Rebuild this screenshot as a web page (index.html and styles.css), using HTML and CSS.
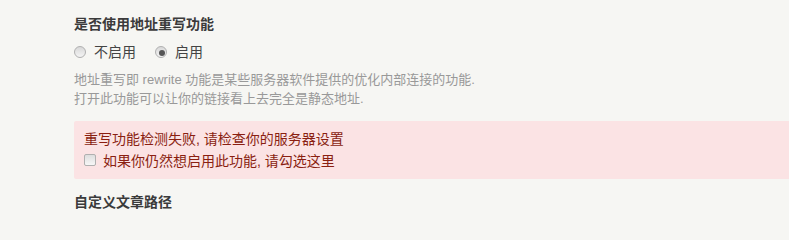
FILE: index.html
```html
<!DOCTYPE html>
<html lang="zh-CN">
<head>
<meta charset="utf-8">
<title>永久链接设置</title>
<link rel="stylesheet" href="styles.css">
</head>
<body>
<div class="page">
  <section class="option">
    <div class="option-label">是否使用地址重写功能</div>
    <div class="radios">
      <label class="radio"><input type="radio" name="rewrite" value="0"><span>不启用</span></label>
      <label class="radio"><input type="radio" name="rewrite" value="1" checked><span>启用</span></label>
    </div>
    <p class="description">地址重写即 rewrite 功能是某些服务器软件提供的优化内部连接的功能.<br>打开此功能可以让你的链接看上去完全是静态地址.</p>
  </section>
  <div class="message error">
    <p class="message-text">重写功能检测失败, 请检查你的服务器设置</p>
    <label class="check"><input type="checkbox" name="anyway"><span>如果你仍然想启用此功能, 请勾选这里</span></label>
  </div>
  <section class="option option-next">
    <div class="option-label">自定义文章路径</div>
  </section>
</div>
</body>
</html>
```

FILE: styles.css
```css
html, body {
  margin: 0;
  padding: 0;
  background: #f6f6f3;
  height: 100%;
  overflow: hidden;
}

body {
  font-family: "Liberation Sans", "Noto Sans CJK SC", sans-serif;
  font-size: 14px;
  color: #444;
}

.page {
  padding: 14px 0 0 74px;
}

.option-label {
  font-weight: bold;
  font-size: 14px;
  line-height: 20px;
  color: #3b3b3b;
}

.radios {
  display: flex;
  align-items: center;
  margin-top: 8px;
  height: 20px;
}

.radio {
  display: flex;
  align-items: center;
  margin-right: 19px;
  line-height: 20px;
}

.radio input,
.check input {
  -webkit-appearance: none;
  appearance: none;
  margin: 0;
  flex: none;
}

.radio input {
  width: 12px;
  height: 12px;
  border: 1px solid #b0b0b0;
  border-radius: 50%;
  background: linear-gradient(#d8d8d8, #f4f4f4);
  margin-right: 8px;
  position: relative;
}

.radio input:checked::after {
  content: "";
  position: absolute;
  left: 3px;
  top: 3px;
  width: 6px;
  height: 6px;
  border-radius: 50%;
  background: #555;
}

.description {
  margin: 8px 0 0;
  font-size: 13px;
  line-height: 19px;
  color: #999;
}

.message {
  margin-top: 13px;
  padding: 8px 10px 9px;
  border-radius: 2px 0 0 2px;
}

.error {
  background: #fbe3e4;
  color: #8a1f11;
}

.message-text {
  margin: 0;
  font-size: 14px;
  line-height: 20px;
}

.check {
  display: flex;
  align-items: center;
  height: 21px;
}

.check input {
  width: 12px;
  height: 12px;
  border: 1px solid #b0b0b0;
  border-radius: 2px;
  background: linear-gradient(#dedede, #f7f7f7);
  margin-right: 7px;
}

.option-next {
  margin-top: 13px;
}
```
